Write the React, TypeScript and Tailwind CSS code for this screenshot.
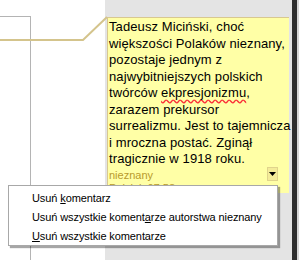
const lines = [
  'Tadeusz Miciński, choć',
  'większości Polaków nieznany,',
  'pozostaje jednym z',
  'najwybitniejszych polskich',
];

export default function App() {
  return (
    <div className="relative flex h-[260px] w-[299px] overflow-hidden bg-white font-['Liberation_Sans',Arial,sans-serif]">
      {/* left page area */}
      <div className="relative h-full w-[105px] shrink-0 bg-white">
        <div className="absolute left-0 top-[16px] h-[244px] w-[31px] border-r border-t border-[#b4b4b4]" />
      </div>

      {/* comment pane */}
      <div className="flex h-full w-[187px] shrink-0 flex-col bg-[#e4e4e4] pl-[2px] pr-[3px] pt-[17px]">
        <div className="relative h-[176px] w-full border-l border-t border-[#d8c890] bg-[#ffffa6] pl-[1px] pt-[1px] text-[13px] leading-[16.5px] tracking-[0.1px] text-black">
          {lines.map((l) => (
            <div key={l} className="whitespace-nowrap">{l}</div>
          ))}
          <div className="whitespace-nowrap">
            twórców <span className="underline decoration-red-500 decoration-wavy underline-offset-2">ekpresjonizmu</span>,
          </div>
          <div className="whitespace-nowrap">zarazem prekursor</div>
          <div className="whitespace-nowrap">surrealizmu. Jest to tajemnicza</div>
          <div className="whitespace-nowrap">i mroczna postać. Zginął</div>
          <div className="whitespace-nowrap">tragicznie w 1918 roku.</div>
          <div className="mt-[1px] text-[11px] leading-[13px] tracking-normal text-[#b89a2c]">nieznany</div>
          <div className="text-[11px] leading-[13px] tracking-normal text-[#b89a2c]">Dzisiaj, 07:58</div>
          <div className="absolute left-[159px] top-[149px] flex h-[14px] w-[11px] items-center justify-center border border-[#e0d48c] bg-[#f4ec98]">
            <svg width="7" height="4" viewBox="0 0 7 4">
              <path d="M0 0h7L3.5 4z" fill="#000" />
            </svg>
          </div>
        </div>
      </div>

      <div className="h-full w-[5px] shrink-0 bg-[#2e2e2e]" />
      <div className="h-full flex-1 bg-[#d6d6d6]" />

      {/* connector line */}
      <svg className="pointer-events-none absolute left-0 top-0" width="110" height="45">
        <polyline points="0,40 83,40 107,17" fill="none" stroke="#d4c48c" strokeWidth="2" />
      </svg>

      {/* context menu */}
      <div className="absolute left-[8px] top-[185px] w-[270px] border border-[#a8a8a8] bg-white pt-[2px] text-[11px] tracking-[-0.1px] text-black shadow-[2px_2px_1px_rgba(0,0,0,0.35)]">
        <div className="flex h-[19px] items-center whitespace-pre pl-[23px] pt-[2px]">
          Usuń <span className="underline">k</span>omentarz
        </div>
        <div className="flex h-[19px] items-center whitespace-pre pl-[23px] pt-[2px]">
          Usuń wszystkie koment<span className="underline">a</span>rze autorstwa nieznany
        </div>
        <div className="flex h-[19px] items-center whitespace-pre pl-[23px] pt-[2px]">
          <span className="underline">U</span>suń wszystkie komentarze
        </div>
      </div>
    </div>
  );
}
